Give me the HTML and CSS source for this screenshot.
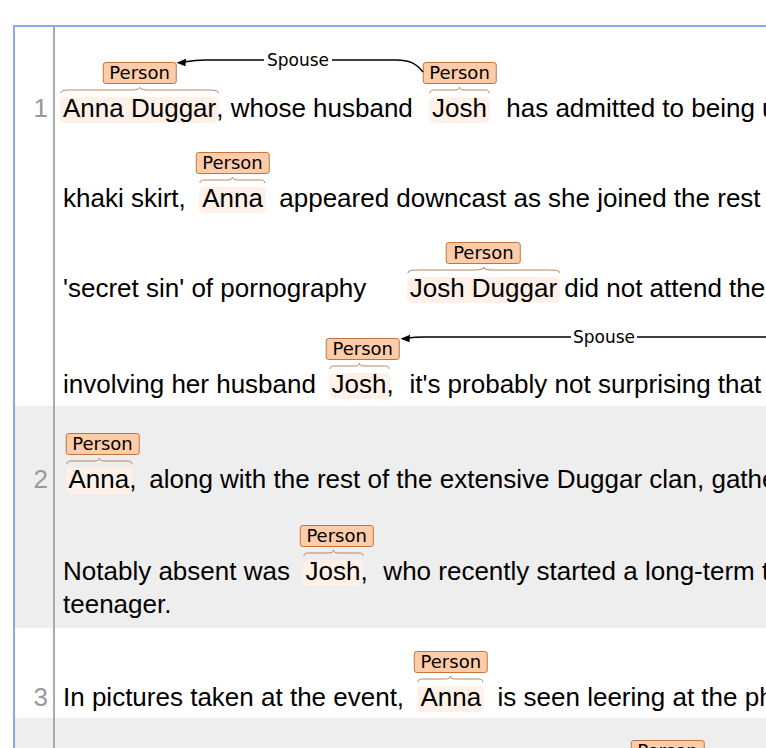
FILE: index.html
```html
<!DOCTYPE html>
<html lang="en">
<head>
<meta charset="utf-8">
<title>Annotation view</title>
<link rel="stylesheet" href="styles.css">
</head>
<body>
<div class="doc">
  <div class="row">
    <div class="num">1</div>
    <div class="text pb7">
      <div class="line p66"><span class="ann wide"><span class="lbl">Person</span><span class="w">Anna Duggar<svg class="brace" viewBox="0 0 100 6" preserveAspectRatio="none"><path d="M0,6 C0,3 3,3 8,3 L44,3 C48,3 50,2 50,0 C50,2 52,3 56,3 L92,3 C97,3 100,3 100,6"/></svg></span></span>, whose husband <span class="ann"><span class="lbl">Person</span><span class="w">Josh<svg class="brace" viewBox="0 0 100 6" preserveAspectRatio="none"><path d="M0,6 C0,3 3,3 10,3 L42,3 C47,3 50,2 50,0 C50,2 53,3 58,3 L90,3 C97,3 100,3 100,6"/></svg></span></span> has admitted to being unfaithful to her, wore a modest blouse and a</div>
      <div class="line p60">khaki skirt, <span class="ann"><span class="lbl">Person</span><span class="w">Anna<svg class="brace" viewBox="0 0 100 6" preserveAspectRatio="none"><path d="M0,6 C0,3 3,3 10,3 L42,3 C47,3 50,2 50,0 C50,2 53,3 58,3 L90,3 C97,3 100,3 100,6"/></svg></span></span> appeared downcast as she joined the rest of the family at the reunion. After his</div>
      <div class="line p60">'secret sin' of pornography      <span class="ann wide"><span class="lbl">Person</span><span class="w">Josh Duggar<svg class="brace" viewBox="0 0 100 6" preserveAspectRatio="none"><path d="M0,6 C0,3 3,3 8,3 L44,3 C48,3 50,2 50,0 C50,2 52,3 56,3 L92,3 C97,3 100,3 100,6"/></svg></span></span> did not attend the gathering. Given the scandal</div>
      <div class="line p66">involving her husband <span class="ann"><span class="lbl">Person</span><span class="w">Josh<svg class="brace" viewBox="0 0 100 6" preserveAspectRatio="none"><path d="M0,6 C0,3 3,3 10,3 L42,3 C47,3 50,2 50,0 C50,2 53,3 58,3 L90,3 C97,3 100,3 100,6"/></svg></span>,</span> it's probably not surprising that Anna looked so subdued.</div>
    </div>
  </div>
  <div class="row alt">
    <div class="num">2</div>
    <div class="text pb9">
      <div class="line p58"><span class="ann"><span class="lbl">Person</span><span class="w">Anna<svg class="brace" viewBox="0 0 100 6" preserveAspectRatio="none"><path d="M0,6 C0,3 3,3 10,3 L42,3 C47,3 50,2 50,0 C50,2 53,3 58,3 L90,3 C97,3 100,3 100,6"/></svg></span>,</span> along with the rest of the extensive Duggar clan, gathered for a family photo.</div>
      <div class="line p62">Notably absent was <span class="ann"><span class="lbl">Person</span><span class="w">Josh<svg class="brace" viewBox="0 0 100 6" preserveAspectRatio="none"><path d="M0,6 C0,3 3,3 10,3 L42,3 C47,3 50,2 50,0 C50,2 53,3 58,3 L90,3 C97,3 100,3 100,6"/></svg></span>,</span> who recently started a long-term treatment programme after molesting girls as a</div>
      <div class="line p3">teenager.</div>
    </div>
  </div>
  <div class="row">
    <div class="num">3</div>
    <div class="text pb6">
      <div class="line p54">In pictures taken at the event, <span class="ann"><span class="lbl">Person</span><span class="w">Anna<svg class="brace" viewBox="0 0 100 6" preserveAspectRatio="none"><path d="M0,6 C0,3 3,3 10,3 L42,3 C47,3 50,2 50,0 C50,2 53,3 58,3 L90,3 C97,3 100,3 100,6"/></svg></span></span> is seen leering at the photographer with a forced smile.</div>
    </div>
  </div>
  <div class="row alt">
    <div class="num">4</div>
    <div class="text pb9">
      <div class="line p53">Her in-laws, Jim Bob and Michelle Duggar, sit by <span class="ann"><span class="lbl">Person</span><span class="w">Anna<svg class="brace" viewBox="0 0 100 6" preserveAspectRatio="none"><path d="M0,6 C0,3 3,3 10,3 L42,3 C47,3 50,2 50,0 C50,2 53,3 58,3 L90,3 C97,3 100,3 100,6"/></svg></span></span> throughout the afternoon.</div>
    </div>
  </div>
</div>
<svg class="arcs" width="766" height="748" viewBox="0 0 766 748">
  <g class="arc-lines">
    <path d="M423,72 C416,63 409,60 396,60 L332,60"/>
    <path d="M264,60 L205,60 C195,60 190,61 184,62"/>
    <path d="M408,338 C413,337.3 418,337 424,337 L571,337"/>
    <path d="M637,337 L766,337"/>
  </g>
  <polygon class="arrow" points="176.5,62.8 186,58.8 185.5,66.2"/>
  <polygon class="arrow" points="400.5,338.8 410,334.8 409.5,342.2"/>
  <text class="arc-label" x="298" y="60">Spouse</text>
  <text class="arc-label" x="604" y="337">Spouse</text>
</svg>
</body>
</html>
```
FILE: styles.css
```css
html, body {
  margin: 0;
  padding: 0;
  overflow: hidden;
  background: #fff;
}

body {
  width: 766px;
  height: 748px;
  font-family: "Liberation Sans", Arial, sans-serif;
  color: #000;
}

.doc {
  margin: 25px 0 0 13px;
  width: 1400px;
  border-top: 2px solid #8ca6f2;
  border-left: 2px solid #8ca6f2;
}

.row {
  display: flex;
  align-items: baseline;
  background: #fff;
}

.row.alt {
  background: #eeeeee;
}

.num {
  flex: 0 0 38px;
  box-sizing: border-box;
  padding-right: 5px;
  text-align: right;
  font-size: 26px;
  line-height: 30px;
  color: #999;
}

.text {
  flex: 1;
  border-left: 2px solid #a9a9a9;
  padding-left: 8px;
  font-size: 26px;
  line-height: 30px;
}

.pb6 { padding-bottom: 6px; }
.pb7 { padding-bottom: 7px; }
.pb9 { padding-bottom: 9px; }

.line {
  white-space: pre;
  isolation: isolate;
}

.p3 { padding-top: 3px; }
.p53 { padding-top: 53px; }
.p54 { padding-top: 54px; }
.p58 { padding-top: 58px; }
.p60 { padding-top: 60px; }
.p62 { padding-top: 62px; }
.p66 { padding-top: 66px; }

.ann {
  display: inline-block;
  position: relative;
  min-width: 79px;
  text-align: center;
  height: 30px;
  vertical-align: baseline;
}

.ann.wide {
  min-width: 0;
}

.lbl {
  position: absolute;
  left: 50%;
  bottom: calc(100% + 9px);
  transform: translateX(-50%);
  box-sizing: border-box;
  height: 22px;
  padding: 0 6px;
  border: 1px solid #c4743c;
  border-radius: 3px;
  background: #ffcca9;
  font-family: "DejaVu Sans", Verdana, sans-serif;
  font-size: 18px;
  line-height: 20px;
  color: #000;
  white-space: nowrap;
}

.w {
  display: inline-block;
  position: relative;
}

.w::before {
  content: "";
  position: absolute;
  left: -3px;
  right: -3px;
  top: 4px;
  bottom: 0;
  border-radius: 5px;
  background: #fff1e8;
  z-index: -1;
}

.brace {
  position: absolute;
  left: -2px;
  top: -6px;
  width: calc(100% + 4px);
  height: 6px;
  overflow: visible;
}

.brace path {
  fill: none;
  stroke: #b88461;
  stroke-width: 1;
  vector-effect: non-scaling-stroke;
}

.arcs {
  position: absolute;
  top: 0;
  left: 0;
  pointer-events: none;
}

.arc-lines path {
  fill: none;
  stroke: #000;
  stroke-width: 1.6;
}

.arrow {
  fill: #000;
}

.arc-label {
  font-family: "DejaVu Sans", Verdana, sans-serif;
  font-size: 17px;
  text-anchor: middle;
  dominant-baseline: central;
  fill: #000;
}
```
